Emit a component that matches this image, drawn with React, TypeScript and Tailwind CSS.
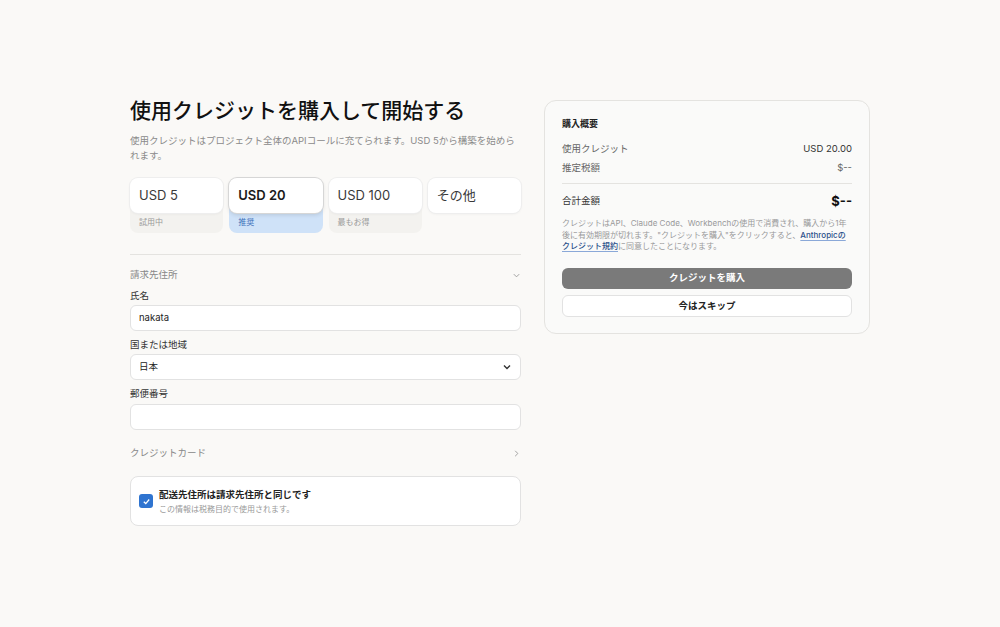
import React from "react";

const F = { fontFamily: 'Inter, "Noto Sans CJK JP", sans-serif' };

function Amount({ label, sub, active }: { label: string; sub?: string; active?: boolean }) {
  return (
    <div className={`flex flex-col rounded-lg ${active ? "bg-[#cfe2f8]" : sub ? "bg-[#f3f2ef]" : ""}`}>
      <div className={`h-[35px] rounded-lg bg-white flex items-center px-[9px] text-[13px] ${active ? "font-semibold text-[#1a1a1a] shadow-[0_0_0_1px_#d6d6d6,0_2px_4px_rgba(0,0,0,0.12)]" : "text-[#3a3a3a] shadow-[0_0_0_1px_#eeeeee,0_1px_3px_rgba(0,0,0,0.06)]"}`}>{label}</div>
      {sub && <div className={`h-[20px] px-[9px] pt-[4px] text-[8px] leading-[10px] ${active ? "text-[#3b6fb8]" : "text-[#999]"}`}>{sub}</div>}
    </div>
  );
}

export default function App() {
  return (
    <div style={F} className="w-[1000px] h-[627px] bg-[#faf9f7] flex justify-center gap-[23px] pt-[100px] text-[#222]">
      <div className="w-[391px] flex flex-col">
        <h1 className="text-[21px] font-medium leading-[22px] text-[#111]">使用クレジットを購入して開始する</h1>
        <p className="text-[9.5px] leading-[15px] text-[#8a8a8a] mt-[11px]">使用クレジットはプロジェクト全体のAPIコールに充てられます。USD 5から構築を始められます。</p>
        <div className="grid grid-cols-4 gap-[6px] mt-[15px] items-start">
          <Amount label="USD 5" sub="試用中" />
          <Amount label="USD 20" sub="推奨" active />
          <Amount label="USD 100" sub="最もお得" />
          <Amount label="その他" />
        </div>
        <div className="border-t border-[#e4e3e0] mt-[21px]" />
        <div className="flex justify-between items-center mt-[14px] leading-[12px] text-[9.5px] text-[#888]">
          <span>請求先住所</span>
          <svg width="9" height="9" viewBox="0 0 10 10"><path d="M2 3.5 5 6.5 8 3.5" fill="none" stroke="#999" strokeWidth="1"/></svg>
        </div>
        <label className="text-[9.5px] leading-[12px] text-[#333] mt-[9px]">氏名</label>
        <div className="mt-[3px] h-[26px] rounded-md bg-white border border-[#e2e2e2] flex items-center px-[8px] text-[9.5px]">nakata</div>
        <label className="text-[9.5px] leading-[12px] text-[#333] mt-[8px]">国または地域</label>
        <div className="mt-[3px] h-[26px] rounded-md bg-white border border-[#e2e2e2] flex items-center justify-between px-[8px] text-[9.5px]">
          <span>日本</span>
          <svg width="10" height="10" viewBox="0 0 10 10"><path d="M2 3.5 5 6.5 8 3.5" fill="none" stroke="#333" strokeWidth="1.4"/></svg>
        </div>
        <label className="text-[9.5px] leading-[12px] text-[#333] mt-[8px]">郵便番号</label>
        <div className="mt-[4px] h-[26px] rounded-md bg-white border border-[#e2e2e2]" />
        <div className="flex justify-between items-center mt-[17px] leading-[12px] text-[9.5px] text-[#888]">
          <span>クレジットカード</span>
          <svg width="9" height="9" viewBox="0 0 10 10"><path d="M3.5 2 6.5 5 3.5 8" fill="none" stroke="#999" strokeWidth="1"/></svg>
        </div>
        <div className="mt-[17px] h-[50px] rounded-lg bg-white border border-[#e2e2e2] flex items-center gap-[6px] px-[8px]">
          <div className="w-[14px] h-[14px] rounded-[3px] bg-[#2f74d0] flex items-center justify-center">
            <svg width="9" height="9" viewBox="0 0 10 10"><path d="M2 5.2 4.2 7.3 8 2.8" fill="none" stroke="#fff" strokeWidth="1.4"/></svg>
          </div>
          <div className="flex flex-col">
            <span className="text-[9.5px] leading-[12px] font-semibold text-[#222]">配送先住所は請求先住所と同じです</span>
            <span className="text-[8px] leading-[10px] text-[#999] mt-[3px]">この情報は税務目的で使用されます。</span>
          </div>
        </div>
      </div>
      <div className="w-[326px] self-start rounded-xl border border-[#e4e3e0] bg-[#fafaf9] px-[17px] pt-[17px] pb-[16px] text-[9.5px] leading-[12px]">
        <div className="font-semibold text-[9px] text-[#222]">購入概要</div>
        <div className="flex justify-between mt-[13px] text-[#666]"><span>使用クレジット</span><span className="text-[#333]">USD 20.00</span></div>
        <div className="flex justify-between mt-[7px] text-[#666]"><span>推定税額</span><span>$--</span></div>
        <div className="border-t border-[#e4e3e0] mt-[9px]" />
        <div className="flex justify-between items-center mt-[10px] text-[#333]"><span>合計金額</span><span className="font-bold text-[13px] leading-[14px] text-[#111]">$--</span></div>
        <p className="mt-[10px] text-[8px] leading-[11.5px] text-[#999]">クレジットはAPI、Claude Code、Workbenchの使用で消費され、購入から1年後に有効期限が切れます。"クレジットを購入"をクリックすると、<span className="text-[#2a4f8a] font-medium underline decoration-[#8aa8d8] underline-offset-2">Anthropicのクレジット規約</span>に同意したことになります。</p>
        <div className="mt-[15px] h-[21px] rounded-md bg-[#7a7a7a] text-white font-semibold flex items-center justify-center">クレジットを購入</div>
        <div className="mt-[6px] h-[22px] rounded-md bg-white border border-[#e2e2e2] text-[#222] font-semibold flex items-center justify-center">今はスキップ</div>
      </div>
    </div>
  );
}
